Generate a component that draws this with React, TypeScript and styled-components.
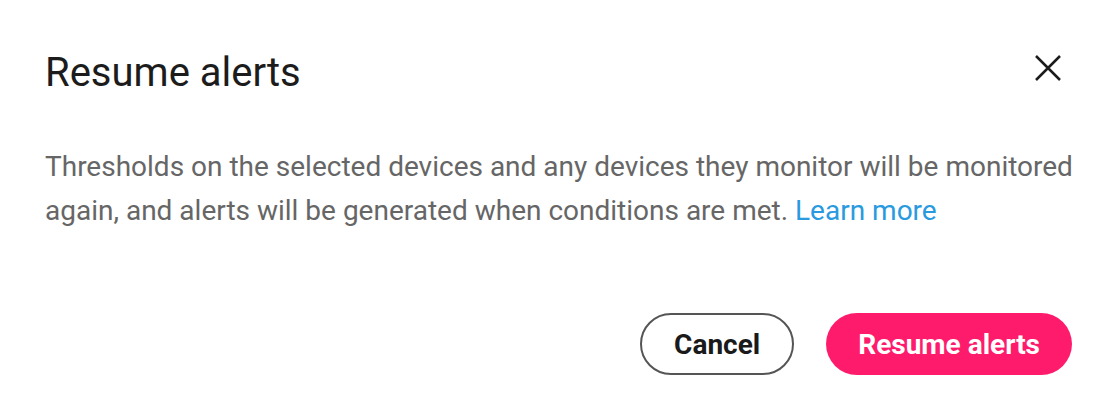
import React from "react";
import styled, { createGlobalStyle } from "styled-components";

const Global = createGlobalStyle`
  html, body { margin: 0; padding: 0; background: #ffffff; }
  body { font-family: Roboto, "Noto Sans", Arial, sans-serif; -webkit-font-smoothing: antialiased; }
`;

const Dialog = styled.div`
  width: 1116px;
  height: 420px;
  box-sizing: border-box;
  padding: 44px 44px 0 45px;
  display: flex;
  flex-direction: column;
  background: #fff;
`;

const Header = styled.div`
  display: flex;
  align-items: center;
  justify-content: space-between;
  height: 56px;
`;

const Title = styled.h1`
  margin: 0;
  font-size: 40px;
  font-weight: 400;
  color: #1c1c1c;
  letter-spacing: 0;
`;

const CloseButton = styled.button`
  width: 40px;
  height: 40px;
  margin: 0 4px 8px 0;
  border: none;
  background: transparent;
  padding: 0;
  display: flex;
  align-items: center;
  justify-content: center;
  cursor: pointer;
`;

const Body = styled.p`
  margin: 45px -8px 0 0;
  font-size: 28px;
  line-height: 44px;
  color: #666666;
`;

const Link = styled.a`
  color: #2a9ae0;
  text-decoration: none;
`;

const Footer = styled.div`
  display: flex;
  justify-content: flex-end;
  gap: 32px;
  margin-top: 80px;
`;

const Button = styled.button<{ $primary?: boolean }>`
  height: 62px;
  border-radius: 31px;
  padding: 0 32px;
  font-family: Roboto, Arial, sans-serif;
  font-size: 28px;
  font-weight: 700;
  cursor: pointer;
  box-sizing: border-box;
  border: ${(p) => (p.$primary ? "none" : "2px solid #555555")};
  background: ${(p) => (p.$primary ? "#ff1b6b" : "#ffffff")};
  color: ${(p) => (p.$primary ? "#ffffff" : "#1a1a1a")};
`;

export default function App() {
  return (
    <>
      <Global />
      <Dialog>
        <Header>
          <Title>Resume alerts</Title>
          <CloseButton aria-label="Close">
            <svg width="26" height="26" viewBox="0 0 26 26">
              <path d="M1 1 L25 25 M25 1 L1 25" stroke="#1c1c1c" strokeWidth="2.5" strokeLinecap="butt" />
            </svg>
          </CloseButton>
        </Header>
        <Body>
          Thresholds on the selected devices and any devices they monitor will be monitored again, and alerts will
          be generated when conditions are met. <Link href="#">Learn more</Link>
        </Body>
        <Footer>
          <Button>Cancel</Button>
          <Button $primary>Resume alerts</Button>
        </Footer>
      </Dialog>
    </>
  );
}
